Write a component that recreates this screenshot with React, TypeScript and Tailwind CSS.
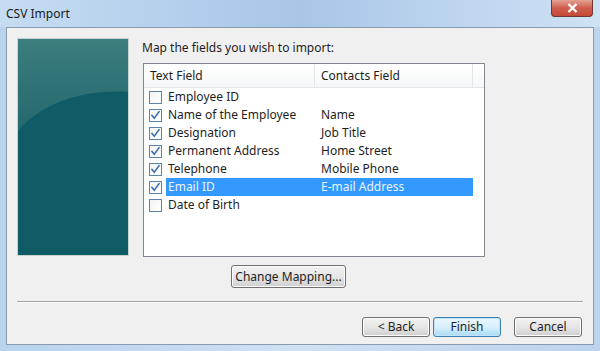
// CSV Import wizard — Windows 7 style dialog, last step (field mapping).
const ROWS: { text: string; contact: string; checked: boolean; selected?: boolean }[] = [
  { text: "Employee ID", contact: "", checked: false },
  { text: "Name of the Employee", contact: "Name", checked: true },
  { text: "Designation", contact: "Job Title", checked: true },
  { text: "Permanent Address", contact: "Home Street", checked: true },
  { text: "Telephone", contact: "Mobile Phone", checked: true },
  { text: "Email ID", contact: "E-mail Address", checked: true, selected: true },
  { text: "Date of Birth", contact: "", checked: false },
];

function CheckBox({ on }: { on: boolean }) {
  return (
    <span className="grid h-[13px] w-[13px] shrink-0 place-items-center border border-[#5b84ad] bg-gradient-to-br from-[#f4f4f4] to-white">
      {on && (
        <svg width="11" height="11" viewBox="0 0 11 11" fill="none" stroke="#3c6fb0" strokeWidth="1.6" strokeLinecap="square">
          <path d="M2 5.5L4.3 8.3L9 1.8" />
        </svg>
      )}
    </span>
  );
}

function WinButton({ label, primary, className }: { label: string; primary?: boolean; className?: string }) {
  return (
    <button
      className={
        "flex items-center justify-center rounded-[3px] border text-[12px] text-[#1e1e1e] " +
        (primary
          ? "border-[#3c7fb1] bg-gradient-to-b from-[#eaf6fd] via-[#d9f0fc] to-[#a7d9f5] shadow-[inset_0_0_0_1px_#c2e4f6] "
          : "border-[#707070] bg-gradient-to-b from-[#f2f2f2] via-[#e6e6e6] to-[#cfcfcf] shadow-[inset_0_0_0_1px_#fcfcfc] ") +
        (className ?? "")
      }
    >
      {label}
    </button>
  );
}

export default function App() {
  return (
    <div
      className="flex h-[351px] w-[600px] flex-col overflow-hidden bg-gradient-to-r from-[#b9d3ee] via-[#cfe1f3] to-[#bcd4ec]"
      style={{ fontFamily: '"Noto Sans", "Open Sans", sans-serif' }}
    >
      {/* title bar */}
      <div className="relative flex h-[27px] shrink-0 items-center bg-gradient-to-r from-[#c5dcf2] via-[#a9c6e8] to-[#cfe2f4] pl-[6px]">
        <span className="text-[12px] text-[#1b1b1b]">CSV Import</span>
        <div className="absolute right-[7px] top-0 flex h-[17px] w-[42px] items-center justify-center rounded-b-[4px] border border-t-0 border-[#6d3a33] bg-gradient-to-b from-[#e3a393] via-[#cf5d4c] to-[#c44a37]">
          <svg width="11" height="10" viewBox="0 0 11 10" fill="none" stroke="#fff" strokeWidth="2.4">
            <path d="M1.5 1l8 8M9.5 1l-8 8" />
          </svg>
        </div>
      </div>

      {/* client area */}
      <div className="mx-[6px] flex h-[318px] flex-col border border-[#8a9bb0] bg-[#f0f0f0]">
        <div className="flex gap-[13px] pl-[10px] pt-[10px]">
          {/* wizard artwork */}
          <div className="h-[218px] w-[112px] shrink-0 border border-[#c9d3d3] bg-[#0f5c67]">
            <svg width="110" height="216" viewBox="0 0 110 216">
              <defs>
                <linearGradient id="top" x1="0" y1="0" x2="0" y2="1">
                  <stop offset="0" stopColor="#3c7d7e" />
                  <stop offset="1" stopColor="#24696f" />
                </linearGradient>
              </defs>
              <rect width="110" height="216" fill="#0f5c67" />
              <path d="M0 0H110V53C70 50 25 62 0 92Z" fill="url(#top)" />
            </svg>
          </div>

          {/* mapping */}
          <div className="flex flex-col">
            <p className="mt-[1px] h-[17px] text-[12px] leading-[17px] text-[#1e1e1e]">Map the fields you wish to import:</p>
            <div className="ml-[1px] mt-[7px] h-[194px] w-[342px] border border-[#828790] bg-white">
              <div className="flex h-[24px] border-b border-[#e5e5e5] bg-gradient-to-b from-white to-[#f6f7f8] text-[12px] text-[#1e1e1e]">
                <div className="flex w-[171px] items-center border-r border-[#e3e4e6] pl-[6px]">Text Field</div>
                <div className="flex w-[158px] items-center border-r border-[#e3e4e6] pl-[6px]">Contacts Field</div>
                <div className="flex-1" />
              </div>
              <div className="flex flex-col">
                {ROWS.map((r) => (
                  <div key={r.text} className="flex h-[18px] items-center text-[12px] text-[#1e1e1e]">
                    <span className="ml-[5px] mr-[4px]">
                      <CheckBox on={r.checked} />
                    </span>
                    <div className={"flex h-full w-[307px] items-center " + (r.selected ? "bg-[#3399ff] text-[#eaf3ff]" : "")}>
                      <span className="w-[153px] pl-[2px]">{r.text}</span>
                      <span className="pl-[2px]">{r.contact}</span>
                    </div>
                  </div>
                ))}
              </div>
            </div>
          </div>
        </div>

        <WinButton label="Change Mapping..." className="ml-[224px] mt-[8px] h-[23px] w-[115px]" />

        {/* separator */}
        <div className="ml-[10px] mt-[13px] h-[2px] w-[566px] border-b border-t border-b-white border-t-[#a0a0a0]" />

        <div className="mt-[14px] flex justify-end pr-[11px]">
          <WinButton label="< Back" className="h-[20px] w-[68px]" />
          <WinButton label="Finish" primary className="ml-[3px] h-[20px] w-[68px]" />
          <WinButton label="Cancel" className="ml-[13px] h-[20px] w-[68px]" />
        </div>
      </div>
    </div>
  );
}
